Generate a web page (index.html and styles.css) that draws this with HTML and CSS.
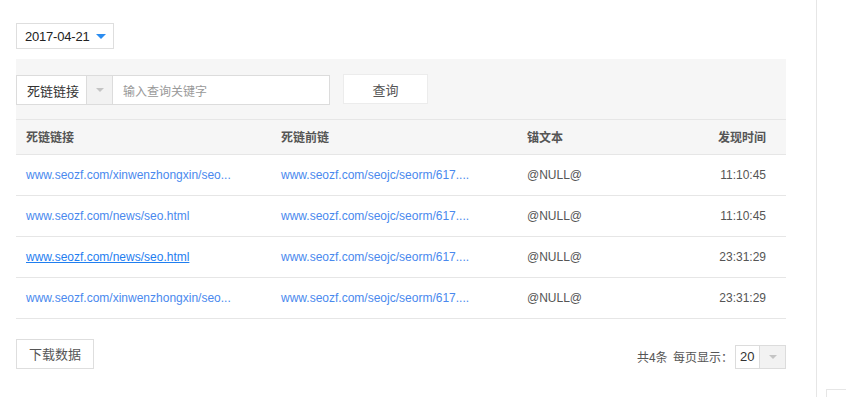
FILE: index.html
```html
<!DOCTYPE html>
<html lang="zh-CN">
<head>
<meta charset="utf-8">
<title>死链</title>
<link rel="stylesheet" href="styles.css">
</head>
<body>
<div class="page">
  <main class="main">
    <div class="date-select">
      <span class="date-text">2017-04-21</span>
      <span class="tri-blue"></span>
    </div>
    <div class="search-panel">
      <div class="combo">
        <span class="combo-label">死链链接</span>
        <span class="combo-arrow"><span class="tri-gray"></span></span>
        <span class="combo-input">输入查询关键字</span>
      </div>
      <button class="btn-query">查询</button>
    </div>
    <table class="grid">
      <thead>
        <tr>
          <th class="c1">死链链接</th>
          <th class="c2">死链前链</th>
          <th class="c3">锚文本</th>
          <th class="c4">发现时间</th>
        </tr>
      </thead>
      <tbody>
        <tr>
          <td class="c1"><a class="lnk">www.seozf.com/xinwenzhongxin/seo...</a></td>
          <td class="c2"><a class="lnk">www.seozf.com/seojc/seorm/617....</a></td>
          <td class="c3">@NULL@</td>
          <td class="c4">11:10:45</td>
        </tr>
        <tr>
          <td class="c1"><a class="lnk">www.seozf.com/news/seo.html</a></td>
          <td class="c2"><a class="lnk">www.seozf.com/seojc/seorm/617....</a></td>
          <td class="c3">@NULL@</td>
          <td class="c4">11:10:45</td>
        </tr>
        <tr>
          <td class="c1"><a class="lnk hover">www.seozf.com/news/seo.html</a></td>
          <td class="c2"><a class="lnk">www.seozf.com/seojc/seorm/617....</a></td>
          <td class="c3">@NULL@</td>
          <td class="c4">23:31:29</td>
        </tr>
        <tr>
          <td class="c1"><a class="lnk">www.seozf.com/xinwenzhongxin/seo...</a></td>
          <td class="c2"><a class="lnk">www.seozf.com/seojc/seorm/617....</a></td>
          <td class="c3">@NULL@</td>
          <td class="c4">23:31:29</td>
        </tr>
      </tbody>
    </table>
    <div class="footer">
      <button class="btn-download">下载数据</button>
      <div class="pager">
        <span class="pager-text">共4条&nbsp;&nbsp;每页显示：</span>
        <div class="size-select">
          <span class="size-val">20</span>
          <span class="size-arrow"><span class="tri-gray"></span></span>
        </div>
      </div>
    </div>
  </main>
  <aside class="side">
    <div class="side-box"></div>
  </aside>
</div>
</body>
</html>
```

FILE: styles.css
```css
* { box-sizing: border-box; }
html, body {
  margin: 0;
  padding: 0;
  background: #fff;
  height: 100%;
}
body {
  font-family: "Liberation Sans", Arial, "Noto Sans CJK SC", sans-serif;
  font-size: 12px;
  color: #555;
  overflow: hidden;
}
.page {
  display: flex;
  height: 397px;
  width: 846px;
}
.main {
  width: 816px;
  padding: 23px 30px 0 16px;
}
.side {
  flex: 1;
  border-left: 1px solid #e6e6e6;
  display: flex;
  flex-direction: column;
  justify-content: flex-end;
  padding-left: 9px;
}
.side-box {
  height: 8px;
  border-top: 1px solid #e6e6e6;
  border-left: 1px solid #e6e6e6;
}
.date-select {
  width: 98px;
  height: 26px;
  border: 1px solid #dedede;
  display: flex;
  align-items: center;
  padding-left: 8px;
  font-size: 13px;
  color: #222;
}
.date-text { flex: none; letter-spacing: -0.2px; }
.tri-blue {
  margin-left: 6px;
  width: 0;
  height: 0;
  border-left: 5px solid transparent;
  border-right: 5px solid transparent;
  border-top: 5px solid #2b8cf0;
}
.tri-gray {
  width: 0;
  height: 0;
  border-left: 4px solid transparent;
  border-right: 4px solid transparent;
  border-top: 4px solid #c4c4c4;
}
.search-panel {
  margin-top: 10px;
  background: #f6f6f6;
  padding: 15px 0 15px 0;
  display: flex;
  align-items: center;
  height: 61px;
  border-bottom: 1px solid #e6e6e6;
}
.combo {
  display: flex;
  height: 30px;
  border: 1px solid #dcdcdc;
  background: #fff;
  width: 314px;
  margin-top: 2px;
}
.combo-label {
  width: 70px;
  display: flex;
  align-items: center;
  padding-left: 10px;
  font-family: "Noto Sans CJK SC", sans-serif;
  font-size: 13px;
  color: #333;
  border-right: 1px solid #dcdcdc;
}
.combo-arrow {
  width: 26px;
  background: #f2f2f2;
  border-right: 1px solid #dcdcdc;
  display: flex;
  align-items: center;
  justify-content: center;
}
.combo-input {
  flex: 1;
  display: flex;
  align-items: center;
  padding-left: 10px;
  font-family: "Noto Sans CJK SC", sans-serif;
  font-size: 12px;
  color: #999;
}
.btn-query {
  margin-left: 13px;
  width: 85px;
  height: 30px;
  background: #fff;
  border: 1px solid #ececec;
  font-family: "Noto Sans CJK SC", sans-serif;
  font-size: 13px;
  color: #555;
  padding: 0;
}
.grid {
  width: 770px;
  border-collapse: collapse;
  table-layout: fixed;
}
.grid th {
  height: 34px;
  background: #f6f6f6;
  border-bottom: 1px solid #e6e6e6;
  font-family: "Noto Sans CJK SC", sans-serif;
  font-size: 12px;
  font-weight: bold;
  color: #555;
  text-align: left;
  padding: 0 0 0 10px;
}
.grid td {
  height: 41px;
  border-bottom: 1px solid #e6e6e6;
  padding: 0 0 0 10px;
  white-space: nowrap;
  overflow: hidden;
  color: #555;
}
.grid .c1 { width: 255px; }
.grid .c2 { width: 246px; }
.grid .c3 { width: 150px; }
.grid .c4 { text-align: right; padding-right: 20px; }
.lnk {
  color: #4a89ee;
  text-decoration: none;
}
.lnk.hover {
  color: #1f7ef0;
  text-decoration: underline;
}
.footer {
  display: flex;
  justify-content: space-between;
  align-items: flex-end;
  margin-top: 20px;
}
.btn-download {
  width: 78px;
  height: 30px;
  border: 1px solid #dedede;
  background: #fff;
  font-family: "Noto Sans CJK SC", sans-serif;
  font-size: 13px;
  color: #555;
  padding: 0;
}
.pager {
  display: flex;
  align-items: center;
}
.pager-text {
  font-family: "Noto Sans CJK SC", sans-serif;
  font-size: 12px;
  color: #555;
}
.size-select {
  display: flex;
  width: 51px;
  height: 24px;
  border: 1px solid #dcdcdc;
  margin-left: 2px;
}
.size-val {
  width: 24px;
  border-right: 1px solid #dcdcdc;
  display: flex;
  align-items: center;
  padding-left: 4px;
  font-size: 13px;
  color: #333;
}
.size-arrow {
  flex: 1;
  background: #f2f2f2;
  display: flex;
  align-items: center;
  justify-content: center;
}
```
